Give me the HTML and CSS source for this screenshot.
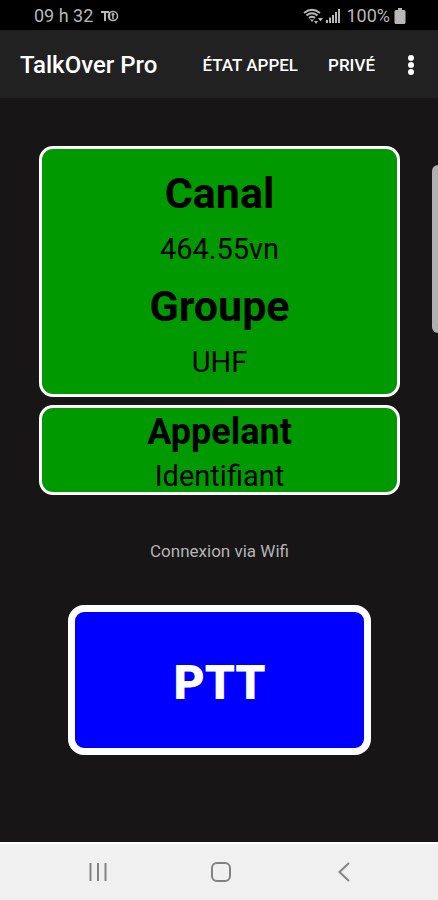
FILE: index.html
```html
<!DOCTYPE html>
<html lang="fr">
<head>
<meta charset="utf-8">
<meta name="viewport" content="width=device-width, initial-scale=1">
<title>TalkOver Pro</title>
<link rel="stylesheet" href="styles.css">
</head>
<body>
<div class="status">
  <span>09 h 32</span>
  <svg class="status-app" width="18" height="12" viewBox="0 0 18 12" fill="none" stroke="currentColor" aria-hidden="true">
    <path d="M0 2h8M4 2v9" stroke-width="2"/>
    <circle cx="12" cy="6" r="4.5" stroke-width="1.5"/>
    <path d="M8.500 2v8M12 3v6M10.500 4.500h3" stroke-width="1.5"/>
  </svg>
  <div class="status-right">
    <svg width="20" height="16" viewBox="0 0 20 16" fill="none" stroke="currentColor" stroke-width="1.8" aria-hidden="true">
      <path d="M1 5Q9-1.5 17 5M3.500 7.500Q9 3 14.500 7.500M6 10Q9 7.500 12 10"/>
      <path d="M7 11.500h4l-2 2.500z" fill="currentColor" stroke="none"/>
      <path d="M11 13h4l-2 3zM15 10h5l-2.500 3.500z" fill="currentColor" stroke="none"/>
    </svg>
    <svg class="signal" width="14" height="14" viewBox="0 0 14 14" fill="currentColor" aria-hidden="true">
      <path d="M0 11h2v3H0zM3 8.500h2V14H3zM6 6h2v8H6zM9 3h2v11H9zM12 0h2v14h-2z"/>
    </svg>
    <span>100%</span>
    <svg class="battery" width="12" height="16" viewBox="0 0 12 16" fill="currentColor" aria-hidden="true">
      <path d="M4 0h4v2h2q1.500 0 1.500 1.500v11q0 1.500-1.500 1.500H2Q.5 16 .5 14.500v-11Q.5 2 2 2h2z"/>
    </svg>
  </div>
</div>
<header class="appbar">
  <h1 class="title">TalkOver Pro</h1>
  <button class="action" type="button">ÉTAT APPEL</button>
  <button class="action" type="button">PRIVÉ</button>
  <button class="more" type="button" aria-label="Plus d'options">
    <svg width="8" height="22" viewBox="0 0 8 22" fill="currentColor" aria-hidden="true">
      <circle cx="4" cy="4" r="3"/><circle cx="4" cy="11" r="3"/><circle cx="4" cy="18" r="3"/>
    </svg>
  </button>
</header>
<main class="content">
  <section class="card channel">
    <h2 class="label">Canal</h2>
    <p class="value">464.55vn</p>
    <h2 class="label">Groupe</h2>
    <p class="value">UHF</p>
  </section>
  <section class="card caller">
    <h2 class="label">Appelant</h2>
    <p class="value">Identifiant</p>
  </section>
  <p class="link-state">Connexion via Wifi</p>
  <button class="ptt" type="button">PTT</button>
  <div class="edge-handle"></div>
</main>
<nav class="navbar">
  <button type="button" aria-label="Applications récentes">
    <svg width="22" height="22" viewBox="0 0 22 22" fill="none" stroke="currentColor" stroke-width="2" aria-hidden="true"><path d="M3.500 2v18M11 2v18M18.500 2v18"/></svg>
  </button>
  <button type="button" aria-label="Accueil">
    <svg width="22" height="22" viewBox="0 0 22 22" fill="none" stroke="currentColor" stroke-width="2" aria-hidden="true"><rect x="2" y="2" width="18" height="18" rx="5"/></svg>
  </button>
  <button type="button" aria-label="Retour">
    <svg width="22" height="22" viewBox="0 0 22 22" fill="none" stroke="currentColor" stroke-width="2" aria-hidden="true"><path d="M16 2L6.500 11l9.500 9"/></svg>
  </button>
</nav>
</body>
</html>
```
FILE: styles.css
```css
* {
  box-sizing: border-box;
}

body {
  margin: 0;
  min-height: 100vh;
  display: flex;
  flex-direction: column;
  background: #171516;
  color: #fff;
  font-family: Roboto, "Liberation Sans", sans-serif;
}

h1, h2, p {
  margin: 0;
}

button {
  padding: 0;
  border: 0;
  background: none;
  color: inherit;
  font: inherit;
}

svg {
  display: block;
}

.status {
  display: flex;
  align-items: center;
  height: 30px;
  padding: 2px 32px 0 34px;
  background: #000;
  color: #b8b8b8;
  font-size: 18px;
  line-height: 28px;
}

.status-app {
  margin-left: 8px;
}

.status-right {
  display: flex;
  align-items: center;
  margin-left: auto;
}

.signal {
  margin: 0 6px 0 3px;
}

.battery {
  margin-left: 4px;
}

.appbar {
  display: flex;
  align-items: center;
  height: 68px;
  padding: 1px 23px 0 20px;
  background: #212121;
}

.title {
  margin-right: auto;
  font-size: 24px;
  font-weight: 500;
  line-height: 32px;
}

.action {
  margin-right: 30px;
  font-size: 17px;
  font-weight: 500;
  line-height: 24px;
}

.more {
  margin-left: 2px;
}

.content {
  position: relative;
  flex: 1;
  display: flex;
  flex-direction: column;
  padding: 48px 38px 48px 39px;
}

.card {
  border: 3px solid #fff;
  border-radius: 14px;
  background: #090;
  color: #000;
  text-align: center;
}

.channel {
  padding: 12px 0 7px;
}

.label {
  font-size: 43px;
  font-weight: 700;
  line-height: 64px;
}

.value {
  font-size: 29px;
  font-weight: 400;
  line-height: 49px;
}

.caller {
  height: 90px;
  margin-top: 8px;
}

.caller .label {
  font-size: 36px;
  line-height: 48px;
}

.caller .value {
  line-height: 40px;
}

.link-state {
  margin-top: 44px;
  color: #b4b4b4;
  font-size: 17px;
  line-height: 24px;
  text-align: center;
}

.ptt {
  height: 150px;
  margin: 42px 29px 0;
  padding-top: 4px;
  border: 7px solid #fff;
  border-radius: 16px;
  background: #00f;
  font-size: 48px;
  font-weight: 900;
}

.edge-handle {
  position: absolute;
  top: 67px;
  right: 0;
  width: 6px;
  height: 168px;
  border-radius: 6px 0 0 6px;
  background: #b0b0b0;
}

.navbar {
  display: flex;
  justify-content: space-between;
  align-items: center;
  height: 58px;
  padding: 0 83px 0 87px;
  border-top: 2px solid #fff;
  background: #f0f0f0;
  color: #828282;
}
```
